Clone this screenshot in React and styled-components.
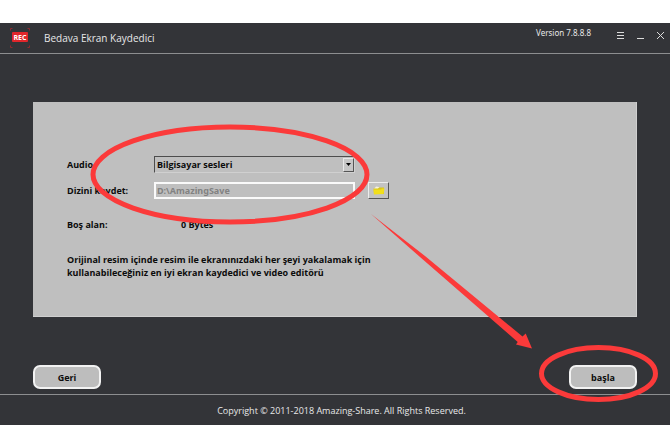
import React, { useState } from 'react';
import styled, { createGlobalStyle } from 'styled-components';

const GlobalStyle = createGlobalStyle`
  * {
    box-sizing: border-box;
  }
  body {
    margin: 0;
    background: #fff;
    font-family: 'Open Sans', 'Noto Sans', sans-serif;
  }
`;

export default function App() {
  const [audio, setAudio] = useState('pc');

  return (
    <Page>
      <GlobalStyle />
      <Window>
        <TitleBar>
          <RecLogo />
          <Title>Bedava Ekran Kaydedici</Title>
          <Version>Version 7.8.8.8</Version>
          <WindowButtons>
            <IconButton aria-label='Menü'>
              <svg width='9' height='9' viewBox='0 0 9 9' stroke='#dcdcdc' strokeWidth='1'>
                <path d='M1 1.5H8M1 4.5H8M1 7.5H8' />
              </svg>
            </IconButton>
            <IconButton aria-label='Küçült'>
              <svg width='9' height='9' viewBox='0 0 9 9' stroke='#dcdcdc' strokeWidth='1'>
                <path d='M1 7.5H8' />
              </svg>
            </IconButton>
            <IconButton aria-label='Kapat'>
              <svg width='9' height='9' viewBox='0 0 9 9' stroke='#dcdcdc' strokeWidth='1'>
                <path d='M1 1L8 8M8 1L1 8' />
              </svg>
            </IconButton>
          </WindowButtons>
        </TitleBar>

        <Panel>
          <Form>
            <Label htmlFor='audio'>Audio</Label>
            <SelectBox>
              <Select id='audio' value={audio} onChange={(e) => setAudio(e.target.value)}>
                <option value='pc'>Bilgisayar sesleri</option>
              </Select>
              <SelectArrow>
                <svg width='5' height='3' viewBox='0 0 5 3'>
                  <path d='M0 0H5L2.5 3Z' fill='#000' />
                </svg>
              </SelectArrow>
            </SelectBox>
            <span />
            <Label htmlFor='folder'>Dizini kaydet:</Label>
            <PathInput id='folder' defaultValue='D:\AmazingSave' readOnly />
            <FolderButton aria-label='Klasör seç'>
              <FolderIcon />
            </FolderButton>
          </Form>
          <SpaceRow>
            <span>Boş alan:</span>
            <output>0 Bytes</output>
          </SpaceRow>
          <Description>
            Orijinal resim içinde resim ile ekranınızdaki her şeyi yakalamak için
            <br />
            kullanabileceğiniz en iyi ekran kaydedici ve video editörü
          </Description>
        </Panel>

        <Actions>
          <ActionButton>Geri</ActionButton>
          <ActionButton>başla</ActionButton>
        </Actions>
        <Footer>Copyright © 2011-2018 Amazing-Share. All Rights Reserved.</Footer>
      </Window>
      <Marks />
    </Page>
  );
}

function RecLogo() {
  return (
    <svg width='20' height='20' viewBox='0 0 20 20'>
      <path
        d='M.5 2.5V.5H2.5M17.5 .5H19.5V2.5M.5 17.5V19.5H2.5M17.5 19.5H19.5V17.5'
        fill='none'
        stroke='#8e2a2f'
      />
      <rect x='2' y='4' width='16' height='10' rx='1' fill='#e0262b' />
      <text
        x='10'
        y='11.5'
        textAnchor='middle'
        fontFamily='Open Sans, sans-serif'
        fontWeight='700'
        fontSize='7'
        fill='#fff'
      >
        REC
      </text>
    </svg>
  );
}

function FolderIcon() {
  return (
    <svg width='12' height='9' viewBox='0 0 12 9'>
      <path d='M1 3L3 .5L6 1L7 3Z' fill='#f6f3dc' />
      <path d='M.5 2.5H5L6 1.5H11V8H1Z' fill='#d8c51c' />
      <path d='M1 8.5L.5 3.5H8L9 2.5H11.5L10.5 8Z' fill='#f2df1b' />
    </svg>
  );
}

// 빨간 표시 (타원 2개 + 화살표)
function Marks() {
  return (
    <MarkLayer width='670' height='447' viewBox='0 0 670 447' aria-hidden='true'>
      <g fill='none' stroke='#fb3a3a' strokeWidth='5'>
        <ellipse cx='230' cy='174.5' rx='137' ry='47.5' />
        <ellipse cx='598.5' cy='373.5' rx='57' ry='26' />
      </g>
      <path
        d='M371 214L425 256L522.5 336.5L525.7 333.5L532 348.5L516 344.5L517.7 342L420 257Z'
        fill='#fb3a3a'
      />
    </MarkLayer>
  );
}

const Page = styled.div`
  position: relative;
  padding: 23px 0 22px;
  overflow: hidden;
`;

const Window = styled.main`
  background: #333438;
  color: #e8e8e8;
`;

const TitleBar = styled.header`
  display: flex;
  align-items: center;
  height: 31px;
  padding: 0 5px 1px 10px;
  border-bottom: 1px solid #8d8e90;
`;

const Title = styled.h1`
  flex: 1;
  margin: 0 0 0 14px;
  font-size: 10px;
  font-weight: 400;
  line-height: 16px;
`;

const Version = styled.span`
  align-self: flex-start;
  padding-top: 4px;
  font-family: 'Noto Sans', sans-serif;
  font-size: 8px;
  line-height: 12px;
`;

const WindowButtons = styled.div`
  display: flex;
  gap: 11px;
  margin-left: 25px;
  padding-bottom: 4px;
`;

const IconButton = styled.button`
  all: unset;
  display: flex;
  cursor: pointer;
`;

const Panel = styled.section`
  margin: 48px 33px 0;
  padding: 54px 34px 37px;
  background: #bfbfbf;
  border: 1px solid #cfcfcf;
  border-width: 0 1px 1px 0;
  color: #0c0c0c;
  font-size: 9px;
  font-weight: 700;
`;

const Form = styled.form`
  display: grid;
  grid-template-columns: 74px minmax(0, 201px) 21px;
  gap: 9px 13px;
  align-items: center;
`;

const Label = styled.label`
  line-height: 17px;
  white-space: nowrap;
`;

const SelectBox = styled.div`
  display: grid;
  align-items: center;
  border: 1px solid;
  border-color: #4d4d4d #d0d0d0 #d0d0d0 #4d4d4d;
  > * {
    grid-area: 1 / 1;
  }
`;

const Select = styled.select`
  appearance: none;
  width: 100%;
  height: 15px;
  padding: 0 14px 0 2px;
  border: 0;
  background: transparent;
  color: inherit;
  font: inherit;
`;

const SelectArrow = styled.span`
  display: flex;
  align-items: center;
  justify-content: center;
  justify-self: end;
  width: 11px;
  height: 14px;
  background: #c6c6c6;
  border: 1px solid;
  border-color: #e8e8e8 #555 #555 #e8e8e8;
  pointer-events: none;
`;

const PathInput = styled.input`
  width: 100%;
  height: 17px;
  padding: 0 1px;
  border: 2px solid #fafafa;
  background: transparent;
  color: #828282;
  font-family: 'Noto Sans', sans-serif;
  font-size: 9px;
  font-weight: 700;
`;

const FolderButton = styled.button`
  display: flex;
  align-items: center;
  justify-content: center;
  width: 21px;
  height: 17px;
  padding: 0;
  background: #c3c3c3;
  border: 1px solid;
  border-color: #ececec #555 #555 #ececec;
  cursor: pointer;
`;

const SpaceRow = styled.div`
  display: flex;
  margin-top: 17px;
  line-height: 17px;
  > :first-child {
    width: 114px;
  }
`;

const Description = styled.p`
  margin: 20px 0 0;
  line-height: 13px;
`;

const Actions = styled.div`
  display: flex;
  justify-content: space-between;
  padding: 48px 33px 5px;
`;

const ActionButton = styled.button`
  width: 68px;
  height: 24px;
  padding: 0;
  border: 2px solid #f2f2f2;
  border-radius: 7px;
  background: #bdbdbd;
  color: #0c0c0c;
  font-family: inherit;
  font-size: 9px;
  font-weight: 700;
  cursor: pointer;
`;

const Footer = styled.footer`
  padding: 10px 20px 8px 33px;
  border-top: 1px solid #8d8e90;
  font-size: 9px;
  line-height: 12px;
  text-align: center;
`;

const MarkLayer = styled.svg`
  position: absolute;
  top: 0;
  left: 0;
  pointer-events: none;
`;
